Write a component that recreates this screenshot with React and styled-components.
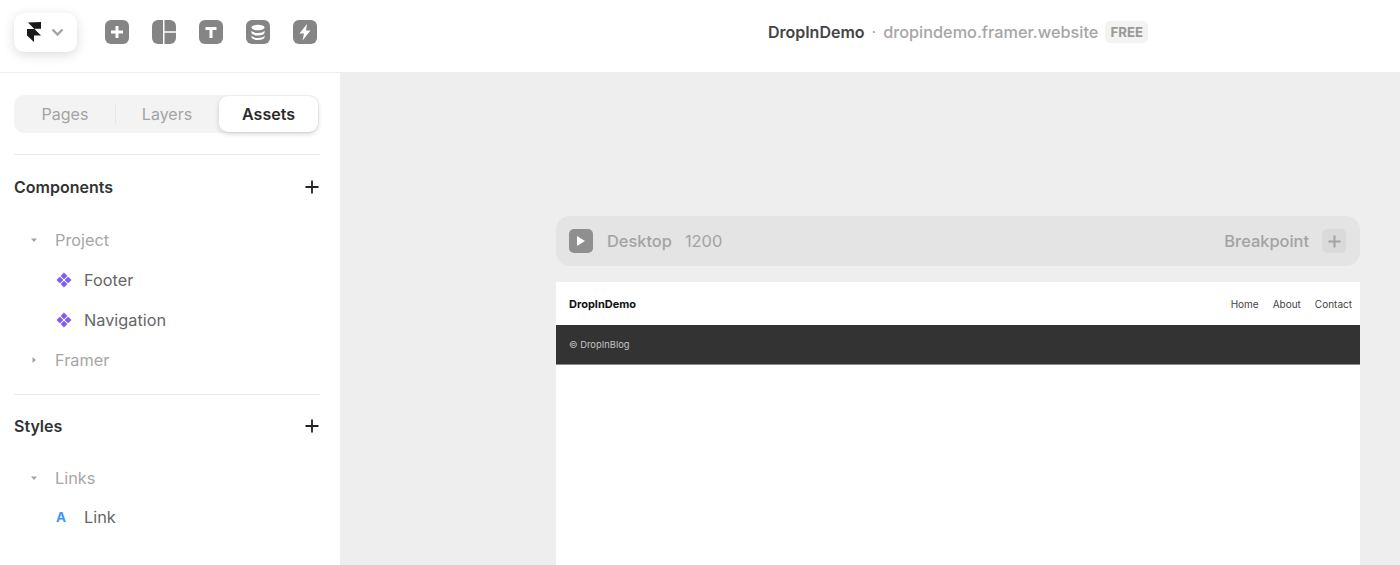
import React from 'react';
import styled, { createGlobalStyle } from 'styled-components';

const GlobalStyle = createGlobalStyle`
  html, body {
    margin: 0;
    padding: 0;
    height: 100%;
    overflow: hidden;
    background: #fff;
    font-family: Inter, "Liberation Sans", sans-serif;
  }
  #root {
    height: 100%;
  }
`;

const Page = styled.div`
  width: 1400px;
  height: 565px;
  display: flex;
  flex-direction: column;
  overflow: hidden;
`;

const TopBar = styled.header`
  height: 73px;
  flex: none;
  box-sizing: border-box;
  border-bottom: 1px solid #eeeeee;
  display: grid;
  grid-template-columns: 340px 1fr;
  align-items: center;
`;

const ToolGroup = styled.div`
  display: flex;
  align-items: center;
  padding: 0 0 8px 14px;
`;

const LogoButton = styled.div`
  width: 64px;
  height: 39px;
  box-sizing: border-box;
  margin-right: 28px;
  border-radius: 10px;
  background: #fff;
  box-shadow: 0 3px 12px rgba(0, 0, 0, 0.14);
  display: flex;
  align-items: center;
  gap: 10px;
  padding-left: 13px;
`;

const ToolIcon = styled.svg`
  width: 24px;
  height: 24px;
  margin-right: 23px;
  flex: none;
`;

const SiteInfo = styled.div`
  display: flex;
  align-items: center;
  justify-content: center;
  padding: 0 0 9px 176px;
  font-size: 16px;
  line-height: 22px;
  white-space: nowrap;
`;

const SiteName = styled.span`
  font-weight: 600;
  color: #444444;
`;

const SiteDot = styled.span`
  color: #a6a6a6;
  margin: 0 7px;
`;

const SiteUrl = styled.span`
  font-weight: 500;
  font-size: 16.3px;
  color: #a6a6a6;
`;

const PlanBadge = styled.span`
  margin-left: 7px;
  padding: 0 5px;
  height: 22px;
  border-radius: 5px;
  background: #f3f3f3;
  color: #999999;
  font-size: 13.3px;
  font-weight: 700;
  line-height: 22px;
`;

const Body = styled.div`
  flex: 1;
  display: flex;
  min-height: 0;
`;

const Sidebar = styled.aside`
  width: 340px;
  flex: none;
  box-sizing: border-box;
  padding: 22px 20px 0 14px;
  background: #fff;
`;

const Tabs = styled.div`
  width: 305px;
  height: 38px;
  border-radius: 10px;
  background: #f3f3f3;
  display: grid;
  grid-template-columns: 102px 102px 101px;
  align-items: center;
`;

const Tab = styled.div`
  height: 36px;
  margin: ${p => (p.$active ? '0 1px' : '0')};
  display: flex;
  align-items: center;
  justify-content: center;
  font-size: 16px;
  font-weight: ${p => (p.$active ? 600 : 400)};
  color: ${p => (p.$active ? '#2b2b2b' : '#a3a3a3')};
  background: ${p => (p.$active ? '#fff' : 'transparent')};
  border-radius: ${p => (p.$active ? '9px' : '0')};
  box-shadow: ${p => (p.$active ? '0 2px 5px rgba(0, 0, 0, 0.16)' : 'none')};
  box-sizing: border-box;
  position: relative;
`;

const TabSeparator = styled.span`
  position: absolute;
  right: 0;
  top: 8px;
  height: 20px;
  width: 1px;
  background: #e6e6e6;
`;

const Divider = styled.div`
  height: 1px;
  background: #eaeaea;
  width: 306px;
  margin-top: ${p => p.$top}px;
`;

const SectionHead = styled.div`
  display: flex;
  align-items: center;
  justify-content: space-between;
  height: 22px;
  margin-top: ${p => p.$above}px;
  margin-bottom: ${p => p.$below}px;
  padding-right: 1px;
  font-size: 16px;
  font-weight: 600;
  color: #333333;
`;

const TreeRow = styled.div`
  height: ${p => p.$height || 40}px;
  display: flex;
  align-items: center;
  padding-left: ${p => (p.$child ? 42 : 17)}px;
  font-size: 16.3px;
  color: ${p => (p.$child ? '#666666' : '#a6a6a6')};
`;

const Caret = styled.svg`
  width: 6px;
  height: 6px;
  margin-right: 18px;
  flex: none;
`;

const RowIcon = styled.span`
  width: 16px;
  height: 16px;
  flex: none;
  margin-right: 12px;
  display: flex;
  align-items: center;
  justify-content: center;
`;

const StyleLetter = styled.span`
  color: #3f97f6;
  font-size: 13.5px;
  font-weight: 700;
  margin-left: -6px;
`;

const Canvas = styled.main`
  flex: 1;
  background: #eeeeee;
  padding: 143px 0 0 216px;
  min-width: 0;
`;

const BreakpointBar = styled.div`
  width: 804px;
  height: 50px;
  box-sizing: border-box;
  border-radius: 14px;
  background: #e4e4e4;
  display: flex;
  align-items: center;
  padding: 0 14px 0 13px;
  font-size: 16.4px;
  font-weight: 500;
  color: #a3a3a3;
`;

const PlayButton = styled.span`
  width: 24px;
  height: 24px;
  border-radius: 5px;
  background: #8f8f8f;
  display: flex;
  align-items: center;
  justify-content: center;
  margin-right: 14px;
`;

const WidthLabel = styled.span`
  margin-left: 13px;
  font-weight: 400;
  color: #a3a3a3;
`;

const BreakpointLabel = styled.span`
  margin-left: auto;
  margin-right: 13px;
  font-weight: 500;
`;

const AddBreakpoint = styled.span`
  width: 24px;
  height: 24px;
  border-radius: 5px;
  background: #dadada;
  display: flex;
  align-items: center;
  justify-content: center;
`;

const Frame = styled.div`
  width: 804px;
  height: 300px;
  margin-top: 16px;
  background: #fff;
`;

const SiteNav = styled.div`
  height: 43px;
  box-sizing: border-box;
  display: flex;
  align-items: center;
  justify-content: space-between;
  padding: 0 8px 0 13px;
`;

const Brand = styled.span`
  font-size: 11px;
  font-weight: 700;
  color: #111111;
`;

const NavLinks = styled.div`
  display: flex;
  gap: 14px;
  font-size: 10px;
  color: #444444;
`;

const SiteFooter = styled.div`
  height: 40px;
  box-sizing: border-box;
  background: #333333;
  border-bottom: 1px solid #8a8a8a;
  display: flex;
  align-items: center;
  padding-left: 13px;
  font-size: 9.4px;
  color: #c4c4c4;
`;

const Icon = ({ children }) => (
  <ToolIcon viewBox="0 0 24 24">{children}</ToolIcon>
);

const ComponentGlyph = () => (
  <svg width="16" height="16" viewBox="0 0 16 16" fill="#7f5af7" stroke="#7f5af7" strokeWidth="0.6" strokeLinejoin="round">
    <path d="M8 .8l3.100 3.100L8 7 4.900 3.900z" />
    <path d="M8 9l3.100 3.100L8 15.200l-3.100-3.100z" />
    <path d="M3.900 4.900L7 8l-3.100 3.100L.8 8z" />
    <path d="M12.100 4.900L15.200 8l-3.100 3.100L9 8z" />
  </svg>
);

const Plus = ({ color = '#222222', size = 14, weight = 1.8 }) => (
  <svg width={size} height={size} viewBox="0 0 14 14">
    <path d="M7 .5v13M.5 7h13" stroke={color} strokeWidth={weight} fill="none" />
  </svg>
);

function App() {
  return (
    <Page>
      <GlobalStyle />
      <TopBar>
        <ToolGroup>
          <LogoButton>
            <svg width="14" height="20" viewBox="0 0 14 20" fill="#1a1a1a">
              <path d="M1 0.500L14 0v6.800H8.500L7.500 7 14 13.500H7V20L0 13.500V7h7.300z" />
            </svg>
            <svg width="13" height="9" viewBox="0 0 13 9">
              <path d="M1.500 1.500L6.500 6.500 11.500 1.500" stroke="#a3a3a3" strokeWidth="2.400" fill="none" />
            </svg>
          </LogoButton>
          <Icon>
            <rect width="24" height="24" rx="6" fill="#858585" />
            <path d="M12 6v12M6 12h12" stroke="#fff" strokeWidth="3" />
          </Icon>
          <Icon>
            <path d="M6 0h5v24H6a6 6 0 0 1-6-6V6a6 6 0 0 1 6-6z" fill="#858585" />
            <path d="M12.500 0H18a6 6 0 0 1 6 6v5.300H12.500z" fill="#858585" />
            <path d="M12.500 12.700H24V18a6 6 0 0 1-6 6h-5.500z" fill="#858585" />
          </Icon>
          <Icon>
            <rect width="24" height="24" rx="6" fill="#858585" />
            <path d="M6.500 7h11v3h-4v8h-3v-8h-4z" fill="#fff" />
          </Icon>
          <Icon>
            <rect width="24" height="24" rx="6" fill="#858585" />
            <ellipse cx="12" cy="7.500" rx="6.500" ry="2.700" fill="#fff" />
            <path d="M5.500 10.500c1 1.800 3.500 2.500 6.500 2.500s5.500-.7 6.500-2.500v2.500c-1 1.800-3.500 2.500-6.500 2.500s-5.500-.7-6.500-2.500z" fill="#fff" />
            <path d="M5.500 15.500c1 1.800 3.500 2.500 6.500 2.500s5.500-.7 6.500-2.500v2c-1 1.800-3.500 2.500-6.500 2.500s-5.500-.7-6.500-2.500z" fill="#fff" />
          </Icon>
          <Icon>
            <rect width="24" height="24" rx="6" fill="#858585" />
            <path d="M14 4L6.500 13.500H11L9.500 20.500 17.500 10.500H13z" fill="#fff" />
          </Icon>
        </ToolGroup>
        <SiteInfo>
          <SiteName>DropInDemo</SiteName>
          <SiteDot>·</SiteDot>
          <SiteUrl>dropindemo.framer.website</SiteUrl>
          <PlanBadge>FREE</PlanBadge>
        </SiteInfo>
      </TopBar>
      <Body>
        <Sidebar>
          <Tabs>
            <Tab>Pages<TabSeparator /></Tab>
            <Tab>Layers</Tab>
            <Tab $active>Assets</Tab>
          </Tabs>
          <Divider $top={21} />
          <SectionHead $above={21} $below={22}>
            Components
            <Plus />
          </SectionHead>
          <TreeRow>
            <Caret viewBox="0 0 6 6"><path d="M0 1.500h6L3 5z" fill="#a3a3a3" /></Caret>
            Project
          </TreeRow>
          <TreeRow $child>
            <RowIcon><ComponentGlyph /></RowIcon>
            Footer
          </TreeRow>
          <TreeRow $child>
            <RowIcon><ComponentGlyph /></RowIcon>
            Navigation
          </TreeRow>
          <TreeRow>
            <Caret viewBox="0 0 6 6"><path d="M1.500 0v6L5 3z" fill="#a3a3a3" /></Caret>
            Framer
          </TreeRow>
          <Divider $top={14} />
          <SectionHead $above={20} $below={21}>
            Styles
            <Plus />
          </SectionHead>
          <TreeRow>
            <Caret viewBox="0 0 6 6"><path d="M0 1.500h6L3 5z" fill="#a3a3a3" /></Caret>
            Links
          </TreeRow>
          <TreeRow $child $height={38}>
            <RowIcon><StyleLetter>A</StyleLetter></RowIcon>
            Link
          </TreeRow>
        </Sidebar>
        <Canvas>
          <BreakpointBar>
            <PlayButton>
              <svg width="10" height="12" viewBox="0 0 10 12"><path d="M1 1l8 5-8 5z" fill="#fff" /></svg>
            </PlayButton>
            Desktop
            <WidthLabel>1200</WidthLabel>
            <BreakpointLabel>Breakpoint</BreakpointLabel>
            <AddBreakpoint><Plus color="#a3a3a3" size={13} weight={2.200} /></AddBreakpoint>
          </BreakpointBar>
          <Frame>
            <SiteNav>
              <Brand>DropInDemo</Brand>
              <NavLinks>
                <span>Home</span>
                <span>About</span>
                <span>Contact</span>
              </NavLinks>
            </SiteNav>
            <SiteFooter>© DropInBlog</SiteFooter>
          </Frame>
        </Canvas>
      </Body>
    </Page>
  );
}

export default App;
